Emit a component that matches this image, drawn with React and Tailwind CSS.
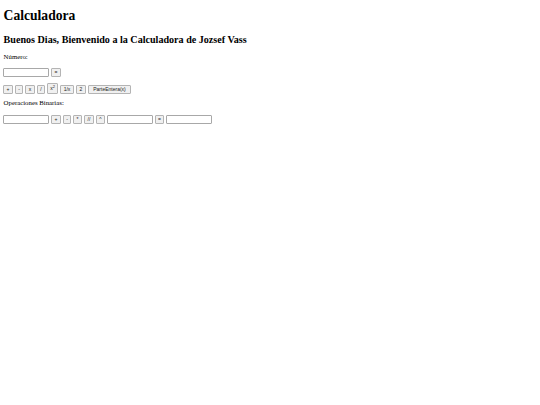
import React, { useState } from "react";

const Btn = ({ children, className = "" }) => (
    <button
        className={`h-[9px] px-[2px] text-[5px] leading-none bg-[#f0f0f0] border border-[#b4b4b4] rounded-[1px] text-[#222] ${className}`}
        style={{ fontFamily: '"Liberation Sans", Arial, sans-serif' }}
    >
        {children}
    </button>
);

const Field = ({ value, onChange }) => (
    <input
        type="text"
        value={value}
        onChange={(e) => onChange(e.target.value)}
        className="w-[46px] h-[9px] border border-[#a8a8a8] rounded-[1px] bg-white text-[6px] px-[1px]"
    />
);

const App = () => {
    const [num, setNum] = useState("");
    const [a, setA] = useState("");
    const [b, setB] = useState("");
    const [res, setRes] = useState("");

    return (
        <div
            className="min-h-screen bg-white text-black px-[3px] pt-[8px]"
            style={{ fontFamily: '"Liberation Serif", "Times New Roman", serif' }}
        >
            {/* Title */}
            <h1 className="text-[13.6px] font-bold leading-[16px] pl-[0.6px]">Calculadora</h1>
            <h2 className="text-[10.1px] font-bold leading-[12px] mt-[10px] pl-[0.6px]">
                Buenos Dias, Bienvenido a la Calculadora de Jozsef Vass
            </h2>

            {/* Unary */}
            <p className="text-[6.8px] leading-[8px] mt-[7px] pl-[0.6px]">Número:</p>
            <div className="flex items-center gap-[2px] mt-[7px]">
                <Field value={num} onChange={setNum} />
                <Btn className="w-[10px]">=</Btn>
            </div>

            <div className="flex items-end gap-[2px] mt-[6px]">
                <Btn className="w-[10px]">+</Btn>
                <Btn className="w-[8px]">-</Btn>
                <Btn className="w-[10px]">x</Btn>
                <Btn className="w-[8px]">/</Btn>
                <Btn className="w-[11px] h-[11px]">
                    x<sup className="text-[4px]">2</sup>
                </Btn>
                <Btn className="w-[14px]">1/x</Btn>
                <Btn className="w-[10px]">2</Btn>
                <Btn className="w-[43px]">ParteEntera(x)</Btn>
            </div>

            {/* Binary */}
            <p className="text-[6.8px] leading-[8px] mt-[5px] pl-[0.6px]">Operaciones Binarias:</p>
            <div className="flex items-center gap-[2px] mt-[8px]">
                <Field value={a} onChange={setA} />
                <Btn className="w-[10px]">+</Btn>
                <Btn className="w-[8px]">-</Btn>
                <Btn className="w-[9px]">*</Btn>
                <Btn className="w-[10px]">//</Btn>
                <Btn className="w-[9px]">^</Btn>
                <Field value={b} onChange={setB} />
                <Btn className="w-[9px]">=</Btn>
                <Field value={res} onChange={setRes} />
            </div>
        </div>
    );
};

export default App;
